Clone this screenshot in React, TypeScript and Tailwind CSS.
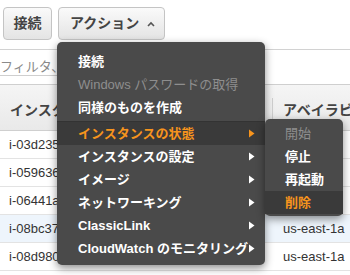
import React from 'react';

const font = { fontFamily: '"Liberation Sans", "Noto Sans CJK JP", sans-serif' };

const Arrow = ({ color }: { color: string }) => (
  <svg width="6" height="9" viewBox="0 0 6 9" className="flex-shrink-0">
    <path d="M0 0.5 L5.5 4.5 L0 8.5 Z" fill={color} />
  </svg>
);

type Item = { label: string; sub?: boolean; active?: boolean; disabled?: boolean };

const mainItems: Item[] = [
  { label: 'インスタンスの状態', sub: true, active: true },
  { label: 'インスタンスの設定', sub: true },
  { label: 'イメージ', sub: true },
  { label: 'ネットワーキング', sub: true },
  { label: 'ClassicLink', sub: true },
  { label: 'CloudWatch のモニタリング', sub: true },
];

const subItems: Item[] = [
  { label: '開始', disabled: true },
  { label: '停止' },
  { label: '再起動' },
  { label: '削除', active: true },
];

const rows = [
  { id: 'i-03d235', az: '' },
  { id: 'i-059636', az: '' },
  { id: 'i-06441a', az: '' },
  { id: 'i-08bc37', az: 'us-east-1a', hl: true },
  { id: 'i-08d980', az: 'us-east-1a' },
];

const MenuRow = ({ item, pl }: { item: Item; pl: string }) => {
  const color = item.active ? 'text-[#f7941d]' : item.disabled ? 'text-[#8e8e8e]' : 'text-white';
  return (
    <div className={`h-[23px] flex items-center justify-between ${pl} pr-[10px] ${item.active ? 'bg-[#3a3a3a]' : ''}`}>
      <span className={`text-[13px] whitespace-nowrap ${item.disabled ? 'font-normal' : 'font-bold'} ${color}`}>{item.label}</span>
      {item.sub && <Arrow color={item.active ? '#f7941d' : '#ffffff'} />}
    </div>
  );
};

export default function App() {
  return (
    <div className="relative w-[350px] h-[275px] overflow-hidden bg-white" style={font}>
      {/* toolbar */}
      <div className="flex gap-[6px] pl-[3px] pt-[7px]">
        <button className="h-[33px] w-[49px] rounded-[4px] border border-[#c4c4c4] bg-gradient-to-b from-[#fafafa] to-[#e4e4e4] text-[14px] font-bold text-[#444]">
          接続
        </button>
        <button className="h-[33px] w-[107px] rounded-[4px] border border-[#c4c4c4] bg-gradient-to-b from-[#fafafa] to-[#e4e4e4] flex items-center pl-[11px] gap-[8px] text-[14px] font-bold text-[#444]">
          <span>アクション</span>
          <svg width="8" height="6" viewBox="0 0 8 6">
            <path d="M1 5 L4 2 L7 5" fill="none" stroke="#555" strokeWidth="1.6" />
          </svg>
        </button>
      </div>

      {/* filter */}
      <div className="mt-[9px] h-[35px] border-t border-[#d2d2d2] bg-white">
        <div className="h-[26px] w-[250px] border-b border-r border-[#cfcfcf] flex items-center">
          <span className="text-[13px] text-[#8a8a8a] pt-[8px]">フィルタ、</span>
        </div>
      </div>

      {/* table header */}
      <div className="h-[47px] flex items-center bg-gradient-to-b from-[#f5f5f5] to-[#e9e9e9] border-t border-b border-[#cfcfcf] overflow-hidden">
        <div className="w-[272px] shrink-0 pl-[10px] text-[14px] font-bold text-[#444] pt-[6px] whitespace-nowrap">インスタンス ID</div>
        <div className="h-[26px] shrink-0 border-l border-[#cfcfcf] mt-[6px]" />
        <div className="shrink-0 pl-[10px] text-[14px] font-bold text-[#444] pt-[6px] whitespace-nowrap">アベイラビリティーゾーン</div>
      </div>

      {/* rows */}
      {rows.map((r) => (
        <div key={r.id} className={`h-[28px] flex items-center border-b border-[#e3e3e3] ${r.hl ? 'bg-[#eef5fc]' : 'bg-white'}`}>
          <div className="w-[273px] shrink-0 pl-[9px] text-[13px] text-[#333]">{r.id}</div>
          <div className="pl-[10px] text-[13px] text-[#333] whitespace-nowrap">{r.az}</div>
        </div>
      ))}

      {/* actions menu */}
      <div className="absolute left-[57px] top-[42px] w-[208px] h-[223px] rounded-[5px] bg-[#4a4a4a] shadow-[0_3px_8px_rgba(0,0,0,0.45)] pt-[8px]">
        <MenuRow item={{ label: '接続' }} pl="pl-[21px]" />
        <MenuRow item={{ label: 'Windows パスワードの取得', disabled: true }} pl="pl-[21px]" />
        <MenuRow item={{ label: '同様のものを作成' }} pl="pl-[21px]" />
        <div className="mt-[2px] border-t border-[#333]" />
        {mainItems.map((it) => (
          <MenuRow key={it.label} item={it} pl="pl-[21px]" />
        ))}
      </div>

      {/* instance state submenu */}
      <div className="absolute left-[265px] top-[119px] w-[78px] h-[97px] rounded-[5px] bg-[#4a4a4a] shadow-[0_3px_8px_rgba(0,0,0,0.45)] pt-[3px]">
        {subItems.map((it) => (
          <MenuRow key={it.label} item={it} pl="pl-[20px]" />
        ))}
      </div>
    </div>
  );
}
